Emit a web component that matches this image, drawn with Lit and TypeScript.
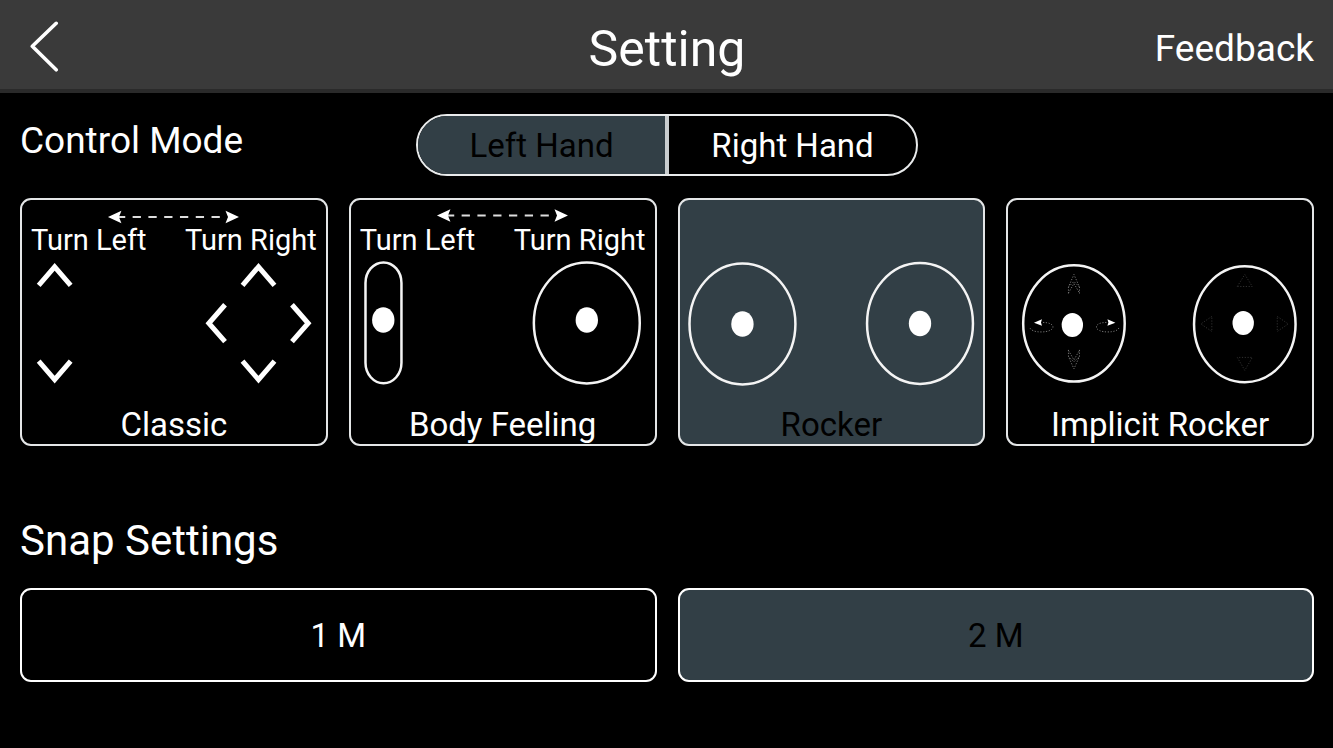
import { LitElement, html, svg, css, nothing } from "lit";
import { customElement, state } from "lit/decorators.js";
import { classMap } from "lit/directives/class-map.js";

type Hand = "left" | "right";
type Mode = "classic" | "body" | "rocker" | "implicit";

const ring = (cx: number, cy: number, rx = 53, ry = 60.5) =>
  svg`<ellipse class="line" cx=${cx} cy=${cy} rx=${rx} ry=${ry} />`;

const knob = (cx: number, cy: number, rx = 11.2, ry = 12.8) =>
  svg`<ellipse class="solid" cx=${cx} cy=${cy} rx=${rx} ry=${ry} />`;

const pads = {
  classic: svg`
    <path class="chevron" d="M16.7 29.4 32.7 10.8 48.7 29.4" />
    <path class="chevron" d="M16.7 105.2 32.7 123.8 48.7 105.2" />
    <path class="chevron" d="M220.7 29.4 236.7 10.8 252.7 29.4" />
    <path class="chevron" d="M220.7 105.2 236.7 123.8 252.7 105.2" />
    <path class="chevron" d="M203.2 48.8 187 67.3 203.2 85.8" />
    <path class="chevron" d="M270.2 48.8 286.4 67.3 270.2 85.8" />`,
  body: svg`
    <rect class="line" x="14.5" y="6.4" width="36" height="121" rx="18" ry="20.5" />
    ${knob(32.3, 64)}${ring(236, 67)}${knob(236, 64)}`,
  rocker: svg`
    ${ring(62.5, 68)}${knob(62.5, 68)}${ring(240.2, 67.5)}${knob(240.2, 67.5)}`,
  implicit: svg`
    ${ring(66, 67.5, 50.8, 58.2)}${knob(64.4, 69, 10.7, 12)}
    <path class="dots" d="M60.5 37.5 60.5 31 66 18.5 71.5 31 71.5 37.5M60.5 31 66 25.5 71.5 31M60.5 37 66 27.5 71.5 37" />
    <path class="dots" d="M60.5 94 60.5 100.5 66 113 71.5 100.5 71.5 94M60.5 100.5 66 106 71.5 100.5M60.5 94.5 66 104 71.5 94.5" />
    <path class="dots" d="M35 66.5C41 66.5 45 68.5 45 71 45 74 40 76 33 76 27 76 23 74.5 22 72" />
    <path class="dots" d="M98.5 66.5C92 66.5 88.5 68.5 88.5 71 88.5 74 93 76 100 76 106 76 110 74.5 111 72" />
    <path class="solid" d="M26 66.8 34 63.3 33 66.5 34 69.7Z" />
    <path class="solid" d="M107.5 66.8 99.5 63.3 100.5 66.5 99.5 69.7Z" />
    ${ring(237, 68.3, 50.8, 58)}${knob(235.4, 67, 10.7, 12)}
    <path class="dots faint" d="M229.5 30.5 237 18.5 244.5 30.5Z" />
    <path class="dots faint" d="M229.5 101.5 237 114.5 244.5 101.5Z" />
    <path class="dots faint" d="M204 60.5 193 68 204 75.5Z" />
    <path class="dots faint" d="M269.5 60.5 280.5 68 269.5 75.5Z" />`,
};

const turnArrow = (y: number) => html`
  <svg class="turn-arrow" viewBox="0 0 304 24" aria-hidden="true">
    <g transform="translate(0 ${y})">
      <path class="dash" d="M97 0H103.3M110.7 0h8.3M126.5 0h8.3M142.3 0h8.3M158.1 0h8.3M173.9 0h8.3M189.7 0h8.3" />
      <path class="solid" d="M86 0 99.5-6.3 97 0 99.5 6.3Z" />
      <path class="solid" d="M217.2 0 203.7-6.3 206.2 0 203.7 6.3Z" />
    </g>
  </svg>`;

const MODES: { id: Mode; label: string; arrowY?: number }[] = [
  { id: "classic", label: "Classic", arrowY: 17 },
  { id: "body", label: "Body Feeling", arrowY: 15.5 },
  { id: "rocker", label: "Rocker" },
  { id: "implicit", label: "Implicit Rocker" },
];

@customElement("app-root")
export class AppRoot extends LitElement {
  static styles = css`
    :host {
      display: block;
      min-height: 100vh;
      background: #000;
      color: #fff;
      font-family: Roboto, "Liberation Sans", sans-serif;
    }
    button {
      margin: 0;
      padding: 0;
      border: 0;
      background: none;
      color: inherit;
      font: inherit;
      cursor: pointer;
    }
    h1,
    h2 {
      margin: 0;
      font-weight: 400;
    }
    svg {
      display: block;
    }
    .topbar {
      box-sizing: border-box;
      height: 93px;
      display: grid;
      grid-template-columns: 1fr auto 1fr;
      align-items: center;
      padding: 8px 19px 0 20px;
      background: #3a3a3a;
      border-bottom: 4px solid #2a2a2a;
    }
    .back {
      justify-self: start;
    }
    .back-icon {
      width: 40px;
      height: 56px;
      fill: none;
      stroke: #fff;
      stroke-width: 3.6;
      stroke-linecap: round;
      stroke-linejoin: round;
    }
    .title {
      font-size: 50px;
      line-height: 60px;
    }
    .feedback {
      justify-self: end;
      font-size: 37px;
      line-height: 44px;
      color: inherit;
      text-decoration: none;
    }
    .content {
      padding: 21px 19px 20px 20px;
    }
    .mode-row {
      display: grid;
      grid-template-columns: 1fr minmax(0, 502px) 1fr;
      align-items: start;
      margin-bottom: 22px;
    }
    .heading {
      font-size: 37px;
      line-height: 54px;
      white-space: nowrap;
    }
    .snap-heading {
      margin: 68px 0 20px;
      font-size: 42px;
    }
    .hands {
      display: grid;
      grid-template-columns: 1fr 1fr;
      box-sizing: border-box;
      height: 62px;
      border: 2px solid #e9ebec;
      border-radius: 31px;
      overflow: hidden;
    }
    .hand {
      padding-top: 2px;
      font-size: 33px;
      line-height: 40px;
    }
    .hand:first-child {
      border-right: 2px solid #c9cdcf;
    }
    .hand:last-child {
      border-left: 2px solid #c9cdcf;
    }
    .selected {
      background: #323f46;
      color: #000;
    }
    .modes {
      display: grid;
      grid-template-columns: repeat(4, minmax(0, 1fr));
      gap: 21px;
    }
    .card {
      display: block;
      border: 2px solid #e4e6e7;
      border-radius: 11px;
      white-space: nowrap;
    }
    .card-head {
      display: block;
      min-height: 56px;
    }
    .turns {
      display: flex;
      justify-content: space-between;
      padding: 0 9px;
      font-size: 29px;
      line-height: 32px;
    }
    .turn-arrow,
    .pads {
      width: 100%;
    }
    .card-label {
      display: block;
      font-size: 33px;
      line-height: 38px;
    }
    .solid {
      fill: #fff;
    }
    .dash {
      fill: none;
      stroke: #ddd;
      stroke-width: 2;
    }
    .line {
      fill: none;
      stroke: #f4f4f4;
      stroke-width: 2.5;
    }
    .chevron {
      fill: none;
      stroke: #fff;
      stroke-width: 5;
    }
    .dots {
      fill: none;
      stroke: #777;
      stroke-width: 1;
      stroke-dasharray: 1.2 1.6;
    }
    .faint {
      stroke: #303030;
    }
    .snaps {
      display: grid;
      grid-template-columns: 1fr 1fr;
      gap: 21px;
    }
    .snap {
      height: 94px;
      border: 2px solid #fff;
      border-radius: 11px;
      font-size: 33px;
      line-height: 40px;
      padding-top: 2px;
    }
  `;

  @state() private hand: Hand = "left";
  @state() private mode: Mode = "rocker";
  @state() private snap = 2;

  private renderHand(id: Hand, label: string) {
    const selected = this.hand === id;
    return html`<button
      class=${classMap({ hand: true, selected })}
      aria-pressed=${selected}
      @click=${() => (this.hand = id)}
    >${label}</button>`;
  }

  private renderMode(m: (typeof MODES)[number]) {
    const selected = this.mode === m.id;
    return html`<button
      class=${classMap({ card: true, selected })}
      aria-pressed=${selected}
      @click=${() => (this.mode = m.id)}
    >
      <span class="card-head">
        ${m.arrowY
          ? html`${turnArrow(m.arrowY)}<span class="turns"><span>Turn Left</span><span>Turn Right</span></span>`
          : nothing}
      </span>
      <svg class="pads" viewBox="0 0 304 150" aria-hidden="true">${pads[m.id]}</svg>
      <span class="card-label">${m.label}</span>
    </button>`;
  }

  render() {
    return html`
      <header class="topbar">
        <button class="back" aria-label="Back">
          <svg class="back-icon" viewBox="0 0 40 56" aria-hidden="true">
            <path d="M36.2 2.3 12.3 25.3 36.2 48.8" />
          </svg>
        </button>
        <h1 class="title">Setting</h1>
        <a class="feedback" href="#feedback">Feedback</a>
      </header>
      <main class="content">
        <div class="mode-row">
          <h2 class="heading">Control Mode</h2>
          <div class="hands" role="group" aria-label="Hand">
            ${this.renderHand("left", "Left Hand")}${this.renderHand("right", "Right Hand")}
          </div>
        </div>
        <div class="modes" role="group" aria-label="Control Mode">
          ${MODES.map((m) => this.renderMode(m))}
        </div>
        <h2 class="heading snap-heading">Snap Settings</h2>
        <div class="snaps" role="group" aria-label="Snap Settings">
          ${[1, 2].map(
            (n) => html`<button
              class=${classMap({ snap: true, selected: this.snap === n })}
              aria-pressed=${this.snap === n}
              @click=${() => (this.snap = n)}
            >${n} M</button>`
          )}
        </div>
      </main>
    `;
  }
}
